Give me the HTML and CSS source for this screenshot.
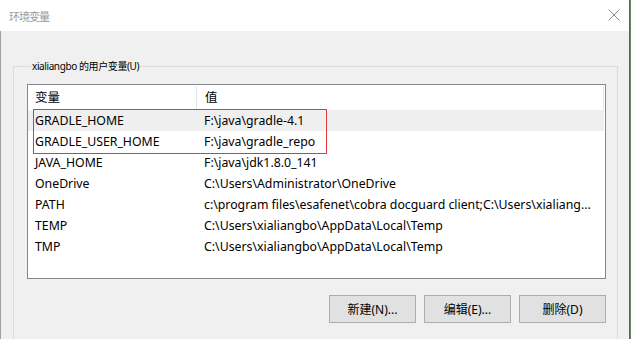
FILE: index.html
```html
<!DOCTYPE html>
<html>
<head>
	<meta charset="utf-8">
	<title>环境变量</title>
	<link rel="stylesheet" href="styles.css">
</head>
<body>
<div class="window">
	<div class="titlebar">
		<span class="title">环境变量</span>
		<svg class="close" width="12" height="12" viewBox="0 0 12 12"><path d="M0.5 0.5L11.5 11.5M11.5 0.5L0.5 11.5" stroke="#8a8a8a" stroke-width="1" fill="none"/></svg>
	</div>
	<div class="client">
		<fieldset class="group">
			<legend>xialiangbo 的用户变量(U)</legend>
			<div class="listview">
				<div class="lv-head">
					<div class="col-name">变量</div>
					<div class="col-value">值</div>
				</div>
				<div class="lv-row selected">
					<div class="col-name">GRADLE_HOME</div>
					<div class="col-value">F:\java\gradle-4.1</div>
				</div>
				<div class="lv-row">
					<div class="col-name">GRADLE_USER_HOME</div>
					<div class="col-value">F:\java\gradle_repo</div>
				</div>
				<div class="lv-row">
					<div class="col-name">JAVA_HOME</div>
					<div class="col-value">F:\java\jdk1.8.0_141</div>
				</div>
				<div class="lv-row">
					<div class="col-name">OneDrive</div>
					<div class="col-value">C:\Users\Administrator\OneDrive</div>
				</div>
				<div class="lv-row">
					<div class="col-name">PATH</div>
					<div class="col-value">c:\program files\esafenet\cobra docguard client;C:\Users\xialiang...</div>
				</div>
				<div class="lv-row">
					<div class="col-name">TEMP</div>
					<div class="col-value">C:\Users\xialiangbo\AppData\Local\Temp</div>
				</div>
				<div class="lv-row">
					<div class="col-name">TMP</div>
					<div class="col-value">C:\Users\xialiangbo\AppData\Local\Temp</div>
				</div>
				<div class="mark"></div>
			</div>
			<div class="buttons">
				<button class="btn">新建(N)...</button>
				<button class="btn">编辑(E)...</button>
				<button class="btn">删除(D)</button>
			</div>
		</fieldset>
	</div>
</div>
</body>
</html>
```

FILE: styles.css
```css
html,body{
	margin: 0;
	padding: 0;
	height: 100%;
	overflow: hidden;
}
body{
	background: #5f8a62;
	font-family: "Noto Sans", "Noto Sans CJK SC", sans-serif;
	font-size: 12.3px;
	color: #000;
}
.window{
	width: 629px;
	height: 100%;
	border-right: 1px solid #4c6e4f;
	background: #f0f0f0;
	display: flex;
	flex-direction: column;
}
.titlebar{
	height: 31px;
	flex: none;
	background: #fff;
	display: flex;
	align-items: center;
	justify-content: space-between;
	padding: 0 9px 0 9px;
}
.title{
	color: #9a9a9a;
	font-size: 11px;
	font-family: "Noto Sans CJK SC", sans-serif;
	letter-spacing: -1px;
}
.close{
	display: block;
	margin-top: -1px;
}
.client{
	flex: 1;
	min-height: 0;
	border-left: 1px solid #a0a0a0;
	padding: 27px 0 0 12px;
	display: flex;
	flex-direction: column;
}
.group{
	flex: 1;
	min-height: 0;
	width: 605px;
	box-sizing: border-box;
	margin: 0;
	padding: 10px 11px 0 13px;
	border: 1px solid #dcdcdc;
	border-bottom: none;
}
.group legend{
	padding: 0 1px;
	margin-left: 4px;
	font-size: 10px;
	letter-spacing: -0.4px;
	line-height: 16px;
}
.listview{
	position: relative;
	width: 579px;
	height: 195px;
	box-sizing: border-box;
	border: 1px solid #828790;
	background: #fff;
}
.lv-head,.lv-row{
	display: flex;
	width: 576px;
}
.lv-head{
	height: 25px;
	align-items: center;
}
.lv-row{
	height: 21px;
	line-height: 21px;
}
.lv-row.selected{
	background: #efefef;
}
.col-name{
	width: 168px;
	padding-left: 7px;
	box-sizing: border-box;
	flex: none;
	white-space: nowrap;
	overflow: hidden;
}
.col-value{
	flex: 1;
	padding-left: 8px;
	white-space: nowrap;
	overflow: hidden;
}
.lv-head .col-name,.lv-head .col-value{
	height: 23px;
	line-height: 23px;
	border-right: 1px solid #e5e5e5;
}
.lv-head .col-name{
	width: 169px;
	font-size: 12.5px;
}
.lv-head .col-value{
	font-size: 12.5px;
}
.mark{
	position: absolute;
	left: 5px;
	top: 24px;
	width: 294px;
	height: 45px;
	box-sizing: border-box;
	border: 1px solid #e2393c;
}
.buttons{
	display: flex;
	justify-content: flex-end;
	gap: 8px;
	width: 579px;
	margin-top: 16px;
}
.btn{
	width: 87px;
	height: 28px;
	margin: 0;
	padding: 0;
	background: #e1e1e1;
	border: 1px solid #adadad;
	font-family: "Noto Sans", "Noto Sans CJK SC", sans-serif;
	font-size: 12px;
	color: #000;
}
```
